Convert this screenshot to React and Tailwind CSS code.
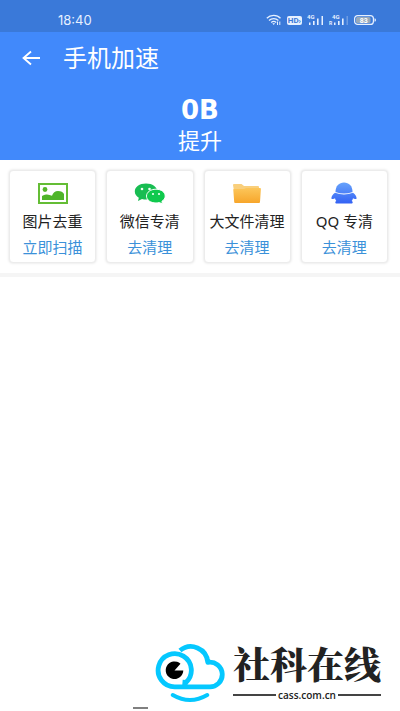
import React from "react";

function WifiIcon() {
  return (
    <svg width="16" height="12" viewBox="0 0 16 12" fill="none" stroke="#e6f0ff" strokeWidth="1.3" aria-hidden="true">
      <path d="M.8 4.2C4.5.5 11 .5 14.5 4.2M3 6.4c2.600-2.300 6.800-2.300 9.400 0M5.200 8.400c1.400-1.200 3.600-1.200 5 0" />
      <path d="M6.300 9.300h2.800l-1.400 1.700z" fill="#e6f0ff" stroke="none" />
      <path d="M11.500 7.500v3.500M13.800 7.500v3.500" strokeWidth="1" />
    </svg>
  );
}

function SignalIcon({ roaming }) {
  return (
    <svg width={roaming ? 20 : 17} height="12" viewBox={roaming ? "-3 0 20 12" : "0 0 17 12"} fill="#e6f0ff" aria-hidden="true">
      <text x="0" y="5" fontSize="6" fontWeight="700" fontFamily="Roboto, sans-serif">4G</text>
      {roaming && <text x="-3" y="11" fontSize="5" fontWeight="700" fontFamily="Roboto, sans-serif">R</text>}
      <path d="M2 8.500h1.500V11H2zM6 7h1.600v4H6zM10 4.500h1.600V11H10z" />
      <path d="M14.500 2h1.500v9h-1.500z" opacity={roaming ? 0.3 : 1} />
    </svg>
  );
}

function BatteryIcon() {
  return (
    <svg width="22" height="10" viewBox="0 0 22 10" aria-hidden="true">
      <rect x=".6" y=".6" width="18.800" height="8.800" rx="3" fill="#3a79d9" stroke="#e6f0ff" strokeWidth="1.200" />
      <rect x="2" y="2" width="14.500" height="6" rx="1.500" fill="#98a9b8" />
      <path d="M20.500 3.200q1.500 0 1.500 1.800t-1.500 1.800z" fill="#e6f0ff" />
      <text x="9.800" y="7.600" fontSize="7" fontWeight="700" textAnchor="middle" fill="#fff" fontFamily="Roboto, sans-serif">83</text>
    </svg>
  );
}

function PictureIcon() {
  return (
    <svg width="30" height="21" viewBox="0 0 30 21" aria-hidden="true">
      <rect x="1" y="1" width="28" height="19" fill="#fff" stroke="#64bd35" strokeWidth="2" />
      <circle cx="7" cy="6.500" r="2.400" fill="#55b52b" />
      <path d="M4 17v-4q2.500-2 5-1.500t5 1.200q1.500-4.700 6-4.700 4.500 0 6 3V17z" fill="#4fb52a" />
    </svg>
  );
}

function WechatIcon() {
  return (
    <svg width="32" height="21" viewBox="0 0 32 21" aria-hidden="true">
      <path d="M12 .5C5.500.5.800 4 .800 8.500c0 2.700 1.600 4.800 4 6.200L4 18l4-2q2 .500 4 .500c6.400 0 11.200-3.500 11.200-8S18.400.5 12 .5z" fill="#18bd52" />
      <path d="M22 6.200c-5.400 0-9.500 3-9.500 6.900s4.100 6.900 9.500 6.900q1.700 0 3.200-.4l3.200 1.200-.5-2.500c2-1.200 3.300-3 3.300-5.200 0-3.900-3.900-6.900-9.200-6.900z" fill="#10c94d" stroke="#fff" strokeWidth="1" />
      <g fill="#eefff3">
        <circle cx="8" cy="6" r="1.300" />
        <circle cx="15.500" cy="6" r="1.300" />
        <circle cx="19" cy="11" r="1.100" />
        <circle cx="25" cy="11" r="1.100" />
      </g>
    </svg>
  );
}

function FolderIcon() {
  return (
    <svg width="28" height="19" viewBox="0 0 28 19" aria-hidden="true">
      <defs>
        <linearGradient id="folder" x1="0" y1="0" x2="0" y2="1">
          <stop offset="0" stopColor="#fcc65a" />
          <stop offset="1" stopColor="#f7a62b" />
        </linearGradient>
      </defs>
      <path d="M0 1q0-1 1-1h7.500l2.500 2H25q1 0 1 1v4H1z" fill="#f9cf7c" />
      <path d="M1 5h10l2-1h14q1 0 .9 1L27 18q0 1-1 1H2.200q-1 0-1-1L.3 6Q.2 5 1 5z" fill="url(#folder)" />
    </svg>
  );
}

function PenguinIcon() {
  return (
    <svg width="26" height="22" viewBox="0 0 26 22" aria-hidden="true">
      <defs>
        <linearGradient id="penguin" gradientUnits="userSpaceOnUse" x1="0" y1="0" x2="0" y2="22">
          <stop offset="0" stopColor="#68a4fb" />
          <stop offset="1" stopColor="#3260f4" />
        </linearGradient>
      </defs>
      <g fill="url(#penguin)">
        <path d="M4.500 10C4.500 4 8 .5 13 .5s8.500 3.500 8.500 9.500Q13 13 4.500 10z" />
        <path d="M4 10.800q9 3.200 18 0c2.300 1.700 3.700 3.700 3.600 5.900-1.300.500-2.600.400-3.600-.400q-.3 1.700-1.300 2.700c1.300.500 1.300 2 .300 2.500H5c-1-.500-1-2 .300-2.500q-1-1-1.300-2.700c-1 .800-2.300.900-3.600.400C.3 14.500 1.700 12.500 4 10.800z" />
      </g>
    </svg>
  );
}

function CloudLogo() {
  return (
    <svg className="shrink-0" width="70" height="60" viewBox="155 643 70 60" fill="none" aria-hidden="true">
      <g stroke="#05c8ff" strokeWidth="4.800">
        <path d="M182.500 682.200L186 682.500A16.600 16.600 0 1 0 174.700 686.900H209A12.400 12.400 0 1 0 207.800 662.300A17 17 0 0 0 180 650.500" strokeLinejoin="round" />
        <path d="M172.800 695Q190 705 207.200 695" strokeLinecap="round" strokeWidth="4" />
      </g>
      <path d="M174.500 670.500H183.300A8.800 8.800 0 1 1 180.500 663.800z" fill="#000" />
    </svg>
  );
}

const tools = [
  { name: "图片去重", action: "立即扫描", Icon: PictureIcon },
  { name: "微信专清", action: "去清理", Icon: WechatIcon },
  { name: "大文件清理", action: "去清理", Icon: FolderIcon },
  { name: "QQ 专清", action: "去清理", Icon: PenguinIcon },
];

function ToolCard({ name, action, Icon }) {
  return (
    <article className="flex min-w-0 flex-1 flex-col items-center rounded-sm border border-[#ececec] bg-white pt-2.5 pb-[3px] shadow-[0_0_3px_#dddddd]">
      <div className="flex h-6 items-center">
        <Icon />
      </div>
      <h2 className="mt-1 text-[15px] leading-6 whitespace-nowrap text-[#222222]">{name}</h2>
      <button type="button" className="mt-0.5 text-[15px] leading-6 whitespace-nowrap text-[#3b91d9]">
        {action}
      </button>
    </article>
  );
}

export default function App() {
  return (
    <div className="flex min-h-screen flex-col bg-white font-['Noto_Sans','Noto_Sans_CJK_SC',sans-serif]">
      <div className="flex h-8 items-center justify-between bg-[#3a79d9] pt-2 pr-6 pl-[58px] text-[#e6f0ff]">
        <time className="font-['Inter',sans-serif] text-[13px] leading-4">18:40</time>
        <div className="flex items-center gap-[5px]">
          <WifiIcon />
          <span className="rounded-xs bg-[#e6f0ff] px-px font-['Roboto',sans-serif] text-[8px] leading-[9px] font-bold text-[#3a79d9]">HD›</span>
          <SignalIcon />
          <SignalIcon roaming />
          <BatteryIcon />
        </div>
      </div>
      <header className="bg-[#4189fb] pb-1.5 text-white">
        <div className="flex h-13 items-center gap-[22px] pl-[21px]">
          <button type="button" aria-label="返回">
            <svg width="20" height="16" viewBox="0 0 20 16" fill="none" stroke="currentColor" strokeWidth="1.800" aria-hidden="true">
              <path d="M19 8H2.500M10 1.500L2.500 8l7.500 6.500" />
            </svg>
          </button>
          <h1 className="text-2xl">手机加速</h1>
        </div>
        <div className="flex flex-col items-center pt-2.5">
          <strong className="font-['DejaVu_Sans',sans-serif] text-[26px] leading-8 font-bold">0B</strong>
          <span className="text-[22px] leading-7">提升</span>
        </div>
      </header>
      <main className="flex gap-2.5 border-b-4 border-[#f5f5f5] pt-2.5 pr-3 pb-2.5 pl-[9px]">
        {tools.map((tool) => (
          <ToolCard key={tool.name} {...tool} />
        ))}
      </main>
      <footer className="mt-auto flex items-end justify-end pr-[19px]">
        <span className="mr-[7px] mb-0.5 h-0.5 w-[15px] bg-[#808080]" />
        <div className="mb-2 flex items-center gap-2">
          <CloudLogo />
          <div>
            <p className="font-['Noto_Serif_CJK_SC','Noto_Sans_CJK_SC',serif] text-[37px] leading-9 font-black text-[#222222]">社科在线</p>
            <div className="mt-2 flex items-center gap-0.5">
              <span className="h-0.5 flex-1 bg-[#444444]" />
              <a href="#cass" className="font-['Open_Sans',sans-serif] text-[10px] leading-3 font-semibold text-[#222222]">cass.com.cn</a>
              <span className="h-0.5 flex-1 bg-[#444444]" />
            </div>
          </div>
        </div>
      </footer>
    </div>
  );
}
